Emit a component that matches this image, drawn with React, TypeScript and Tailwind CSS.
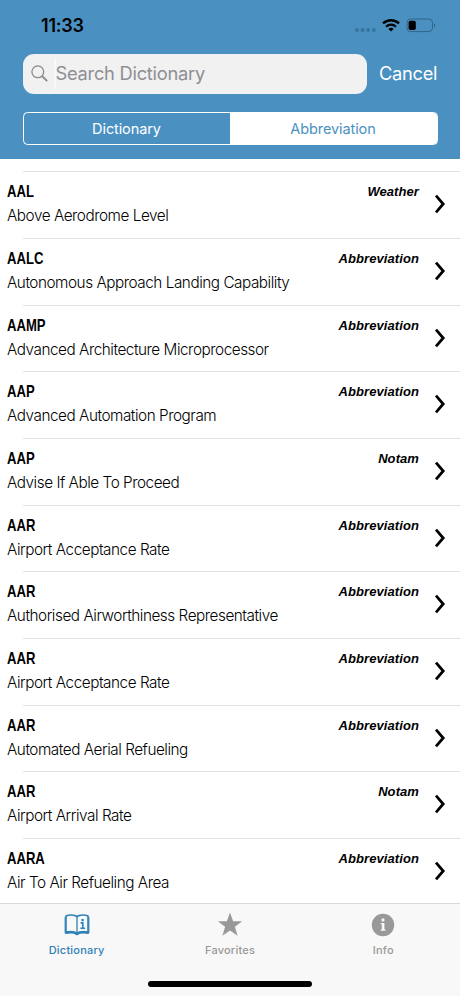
type Entry = {
  code: string;
  meaning: string;
  category: 'Weather' | 'Abbreviation' | 'Notam';
};

const entries: Entry[] = [
  { code: 'AAL', meaning: 'Above Aerodrome Level', category: 'Weather' },
  { code: 'AALC', meaning: 'Autonomous Approach Landing Capability', category: 'Abbreviation' },
  { code: 'AAMP', meaning: 'Advanced Architecture Microprocessor', category: 'Abbreviation' },
  { code: 'AAP', meaning: 'Advanced Automation Program', category: 'Abbreviation' },
  { code: 'AAP', meaning: 'Advise If Able To Proceed', category: 'Notam' },
  { code: 'AAR', meaning: 'Airport Acceptance Rate', category: 'Abbreviation' },
  { code: 'AAR', meaning: 'Authorised Airworthiness Representative', category: 'Abbreviation' },
  { code: 'AAR', meaning: 'Airport Acceptance Rate', category: 'Abbreviation' },
  { code: 'AAR', meaning: 'Automated Aerial Refueling', category: 'Abbreviation' },
  { code: 'AAR', meaning: 'Airport Arrival Rate', category: 'Notam' },
  { code: 'AARA', meaning: 'Air To Air Refueling Area', category: 'Abbreviation' },
];

function StatusBar() {
  return (
    <div className="flex h-[53px] items-start justify-between pl-[41px] pr-[24px] text-black">
      <span className="mt-[14px] text-[18px] leading-6 font-semibold tracking-[-0.2px]">11:33</span>
      <div className="mt-[18px] flex items-start">
        <svg width="21" height="14" viewBox="0 0 21 14" fill="#36749e">
          <rect x="0.2" y="10.2" width="3.6" height="3.6" rx="1" />
          <rect x="5.8" y="10.2" width="3.6" height="3.6" rx="1" />
          <rect x="11.4" y="10.2" width="3.6" height="3.6" rx="1" />
          <rect x="17" y="10.2" width="3.6" height="3.6" rx="1" />
        </svg>
        <svg className="ml-[6px]" width="18" height="14" viewBox="0 0 18 14" fill="none" stroke="currentColor">
          <path d="M1 5.4a11.5 11.5 0 0 1 16 0" strokeWidth="2.5" />
          <path d="M4.1 8.7a7 7 0 0 1 9.8 0" strokeWidth="2.3" />
          <path d="M9 13.6 6.4 11a3.8 3.8 0 0 1 5.2 0Z" fill="currentColor" stroke="none" />
        </svg>
        <svg className="ml-[6px]" width="30" height="15" viewBox="0 0 30 15">
          <rect x="1" y="1" width="25.5" height="12.6" rx="3.6" fill="none" stroke="#2f6588" />
          <rect x="2.6" y="2.8" width="7.2" height="9.2" rx="1.8" />
          <path d="M28 5.2c1.6.7 1.6 3.6 0 4.3Z" fill="#2f6588" />
        </svg>
      </div>
    </div>
  );
}

function SearchBar() {
  return (
    <div className="flex h-[41px] items-center pl-[22.5px]">
      <div className="flex h-10 w-[344px] items-center rounded-[11px] bg-[#f1f1f1] pl-[8px]">
        <svg width="17" height="17" viewBox="0 0 17 17" fill="none" stroke="#8b8b8f" strokeWidth="1.3">
          <circle cx="6.8" cy="6.8" r="5.9" />
          <path d="m11 11 5.2 5.2" strokeWidth="1.8" />
        </svg>
        <div className="ml-[6px] h-[30px] w-[2px] bg-[#f9f9f9]" />
        <span className="text-[18.3px] tracking-[-0.25px] text-[#8e8e93]">Search Dictionary</span>
      </div>
      <button className="ml-[12.5px] text-[18.3px] tracking-[-0.3px] text-white">Cancel</button>
    </div>
  );
}

function SegmentedControl() {
  return (
    <div className="mt-[18px] ml-[22.5px] flex h-[33px] w-[415px] overflow-hidden rounded-[4.5px] border border-white text-[14.5px] tracking-[-0.1px]">
      <button className="w-[206px] text-white">Dictionary</button>
      <button className="flex-1 bg-white text-[#4a91c2]">Abbreviation</button>
    </div>
  );
}

function EntryRow({ entry }: { entry: Entry }) {
  return (
    <li className="flex h-[66.67px] shrink-0 flex-col">
      <div className="ml-[23px] h-px shrink-0 bg-[#e1e1e3]" />
      <div className="flex flex-1 pl-[7px]">
        <div className="flex-1 whitespace-nowrap">
          <p className="mt-[10px] origin-left scale-x-[0.77] font-['Liberation_Sans',sans-serif] text-[17px] leading-5 font-bold">
            {entry.code}
          </p>
          <p className="mt-[4px] text-[15.3px] leading-5 font-light tracking-[-0.46px]">{entry.meaning}</p>
        </div>
        <span className="mt-[11px] font-['Liberation_Sans',sans-serif] text-[13px] leading-[18px] font-bold tracking-[0.08px] italic">
          {entry.category}
        </span>
        <svg className="mt-[22px] mr-[14px] ml-[15px]" width="12" height="20" viewBox="0 0 12 20" fill="none" stroke="black" strokeWidth="2.8">
          <path d="m2 1.6 7.2 8.4L2 18.4" />
        </svg>
      </div>
    </li>
  );
}

function BookIcon() {
  return (
    <svg width="26" height="22" viewBox="0 0 26 22" fill="none" stroke="currentColor">
      <path d="M13 2.5C10.5.6 4.8.6 2 2v16.5c3-1.2 8.500-1.2 11 .7 2.500-1.900 8-1.900 11-.7V2c-2.800-1.400-8.500-1.400-11 .5Z" strokeWidth="1.6" />
      <path d="M13 2.5v17" strokeWidth="1.3" />
      <path d="M1.2 18.8c4-.8 9-1 11.8 1.1 2.8-2.1 7.8-1.9 11.8-1.1" strokeWidth="2.6" />
      <path d="M1.2 3v16M24.8 3v16" strokeWidth="1.2" />
      <path d="M16.6 8.9h2.200v5.400M16.4 14.3h4.600" strokeWidth="1.6" />
      <rect x="17.4" y="5" width="2.3" height="2.2" fill="currentColor" stroke="none" />
    </svg>
  );
}

function StarIcon() {
  return (
    <svg width="26" height="25" viewBox="0 0 26 25" fill="currentColor">
      <path d="m13 .5 3.1 8.700h9.1l-7.3 5.600 2.700 8.900-7.600-5.300-7.600 5.300 2.700-8.900L.8 9.200h9.100Z" />
    </svg>
  );
}

function InfoIcon() {
  return (
    <svg width="24" height="24" viewBox="0 0 24 24">
      <circle cx="12" cy="12" r="11.2" fill="currentColor" />
      <circle cx="12" cy="6.9" r="1.6" fill="#f8f8f8" />
      <path d="M9.7 10h3.700v6.500h1.100v1.300H9.700v-1.300h1.100v-5.200H9.700Z" fill="#f8f8f8" />
    </svg>
  );
}

const tabs = [
  { label: 'Dictionary', Icon: BookIcon, active: true },
  { label: 'Favorites', Icon: StarIcon, active: false },
  { label: 'Info', Icon: InfoIcon, active: false },
];

function TabBar() {
  return (
    <nav className="flex h-[93px] shrink-0 flex-col border-t border-[#d8d8d8] bg-[#f8f8f8]">
      <div className="flex h-[77px] shrink-0">
        {tabs.map(({ label, Icon, active }) => (
          <button
            key={label}
            className={`flex flex-1 flex-col items-center ${active ? 'text-[#2f80b7]' : 'text-[#999999]'}`}
          >
            <span className="mt-[7px] flex h-[27px] items-center">
              <Icon />
            </span>
            <span className="mt-[5px] text-[11px] leading-[14px] font-medium tracking-[0.2px]">{label}</span>
          </button>
        ))}
      </div>
      <div className="mx-auto h-[6px] w-[164px] rounded-full bg-black" />
    </nav>
  );
}

export default function App() {
  return (
    <div className="flex h-[996px] w-[460px] flex-col overflow-hidden bg-white font-['Inter',sans-serif] text-black">
      <header className="h-[159.4px] shrink-0 bg-[#4a91c2]">
        <StatusBar />
        <SearchBar />
        <SegmentedControl />
      </header>
      <ul className="flex min-h-0 flex-1 flex-col overflow-hidden pt-[12px]">
        {entries.map((entry, index) => (
          <EntryRow key={index} entry={entry} />
        ))}
      </ul>
      <TabBar />
    </div>
  );
}
